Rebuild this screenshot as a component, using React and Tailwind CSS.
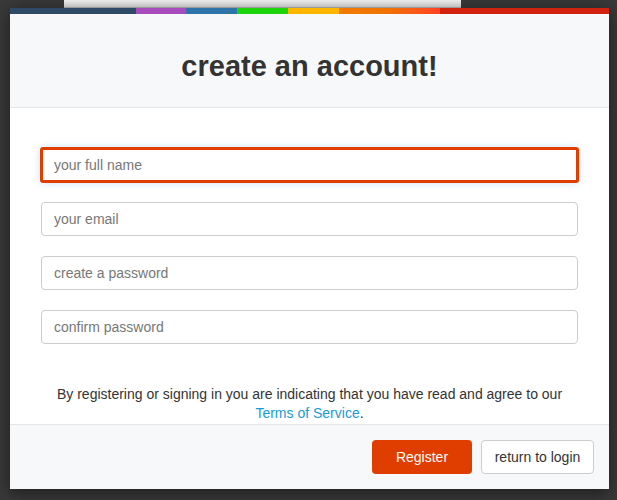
import React from 'react';

const stripe = [
  { w: 'w-[126px]', c: 'bg-[#2e4a66]' },
  { w: 'w-[50px]', c: 'bg-[#a84bbd]' },
  { w: 'w-[51px]', c: 'bg-[#2f74a8]' },
  { w: 'w-[51px]', c: 'bg-[#1bd40a]' },
  { w: 'w-[51px]', c: 'bg-[#ffb600]' },
  { w: 'w-[101px]', c: 'bg-gradient-to-r from-[#f07c00] via-[#f07000] to-[#ff4022]' },
  { w: 'w-[169px]', c: 'bg-[#d0220f]' },
];

function Field({ placeholder, focused, type = 'text' }) {
  return (
    <input
      type={type}
      placeholder={placeholder}
      className={
        focused
          ? 'block w-full h-[34px] rounded-[2px] border-2 border-[#e03e00] bg-white px-[11px] text-[14px] text-[#333] placeholder:text-[#777] outline-none shadow-[0_0_0_1px_#e03e00,0_0_8px_rgba(102,175,233,0.45)]'
          : 'block w-full h-[34px] rounded-[4px] border border-[#cccccc] bg-white px-[12px] text-[14px] text-[#333] placeholder:text-[#777] outline-none'
      }
    />
  );
}

export default function App() {
  return (
    <div className="w-[617px] h-[500px] overflow-hidden bg-[#393939] font-['Liberation_Sans',Arial,sans-serif]">
      {/* window behind the modal */}
      <div className="ml-[64px] w-[397px] h-[8px] bg-gradient-to-b from-[#f4f4f4] to-[#dcdcdc] border-b border-[#b5b5b5]" />

      {/* modal */}
      <div className="ml-[10px] w-[599px] bg-white shadow-[0_4px_16px_rgba(0,0,0,0.5)]">
        <div className="flex h-[6px]">
          {stripe.map((s, i) => (
            <div key={i} className={`${s.w} ${s.c} h-full`} />
          ))}
        </div>

        {/* header */}
        <div className="h-[94px] bg-[#f7f8fa] border-b border-[#e3e5e8] pt-[36px]">
          <h1 className="text-center text-[29px] leading-[32px] font-bold text-[#333]">
            create an account!
          </h1>
        </div>

        {/* body */}
        <div className="px-[31px] pt-[40px] pb-[1px]">
          <div className="flex flex-col gap-[20px]">
            <Field placeholder="your full name" focused />
            <Field placeholder="your email" type="email" />
            <Field placeholder="create a password" type="password" />
            <Field placeholder="confirm password" type="password" />
          </div>
          <p className="mt-[41px] text-center text-[14px] leading-[19px] text-[#333]">
            By registering or signing in you are indicating that you have read and agree to our{' '}
            <a href="#" className="text-[#1b9ad6]">
              Terms of Service
            </a>
            .
          </p>
        </div>

        {/* footer */}
        <div className="h-[65px] bg-[#f7f8fa] border-t border-[#e3e5e8] flex items-start justify-end gap-[9px] pt-[15px] pr-[15px]">
          <button className="w-[100px] h-[34px] rounded-[4px] bg-[#e03e00] text-white text-[14px]">
            Register
          </button>
          <button className="w-[113px] h-[34px] rounded-[4px] bg-white border border-[#cccccc] text-[#333] text-[14px]">
            return to login
          </button>
        </div>
      </div>
    </div>
  );
}
